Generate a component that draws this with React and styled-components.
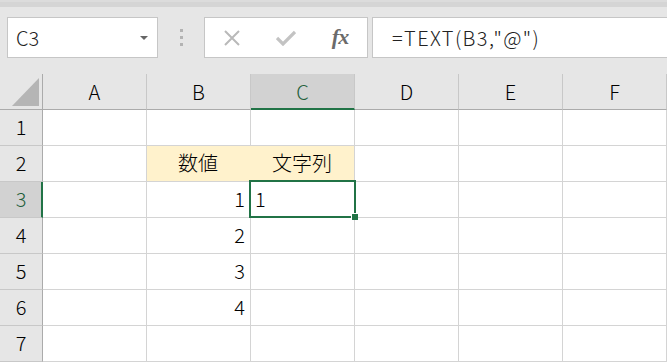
import React from 'react';
import styled, { createGlobalStyle } from 'styled-components';

const GlobalStyle = createGlobalStyle`
  html, body {
    margin: 0;
    padding: 0;
    background: #e6e6e6;
    overflow: hidden;
  }
  body {
    font-family: "Noto Sans CJK JP", "Noto Sans", sans-serif;
    font-weight: 300;
    color: #000;
  }
`;

const Window = styled.div`
  width: 667px;
  height: 362px;
  overflow: hidden;
  background: #e6e6e6;
`;

const TopStrip = styled.div`
  height: 7px;
  background: #d5d5d5;
  border-top: 2px solid #dcdcdc;
  box-sizing: border-box;
`;

const FormulaBar = styled.div`
  display: flex;
  align-items: center;
  height: 67px;
  padding: 10px 0 16px 7px;
  box-sizing: border-box;
`;

const NameBox = styled.div`
  position: relative;
  display: flex;
  align-items: center;
  width: 151px;
  height: 41px;
  box-sizing: border-box;
  padding-left: 8px;
  background: #fff;
  border: 1px solid #c6c6c6;
  font-size: 20px;
  color: #222;
`;

const DropArrow = styled.span`
  position: absolute;
  right: 9px;
  top: 18px;
  width: 0;
  height: 0;
  border-left: 4px solid transparent;
  border-right: 4px solid transparent;
  border-top: 4px solid #666;
`;

const Grip = styled.div`
  width: 46px;
  display: flex;
  flex-direction: column;
  align-items: center;
  gap: 4px;
`;

const GripDot = styled.span`
  width: 3px;
  height: 3px;
  background: #b3b3b3;
`;

const ButtonBox = styled.div`
  display: flex;
  width: 164px;
  height: 41px;
  box-sizing: border-box;
  background: #fff;
  border: 1px solid #c6c6c6;
`;

const BarButton = styled.div`
  flex: 1;
  display: flex;
  align-items: center;
  justify-content: center;
`;

const FxLabel = styled.span`
  font-family: "Liberation Serif", "DejaVu Serif", serif;
  font-style: italic;
  font-weight: bold;
  font-size: 22px;
  color: #6b6b6b;
  letter-spacing: -1px;
  margin-top: -2px;
`;

const FormulaInput = styled.div`
  flex: 1;
  height: 41px;
  margin-left: 4px;
  box-sizing: border-box;
  display: flex;
  align-items: center;
  padding-left: 19px;
  background: #fff;
  border: 1px solid #c6c6c6;
  border-right: none;
  font-size: 20px;
  letter-spacing: 1.4px;
  color: #222;
`;

const Sheet = styled.div`
  display: grid;
  grid-template-columns: 43px repeat(5, 104px) 1fr;
  grid-template-rows: 36px repeat(7, 36px);
  background: #fff;
`;

const Corner = styled.div`
  position: relative;
  background: #e6e6e6;
  border-right: 1px solid #ababab;
  border-bottom: 1px solid #ababab;
`;

const CornerTriangle = styled.span`
  position: absolute;
  right: 3px;
  bottom: 3px;
  width: 0;
  height: 0;
  border-left: 27px solid transparent;
  border-bottom: 28px solid #b5b5b5;
`;

const ColHeader = styled.div`
  display: flex;
  align-items: center;
  justify-content: center;
  box-sizing: border-box;
  background: ${(p) => (p.$active ? '#d2d2d2' : '#e6e6e6')};
  border-right: 1px solid #c8c8c8;
  border-bottom: ${(p) => (p.$active ? '2px solid #217346' : '1px solid #ababab')};
  color: ${(p) => (p.$active ? '#1e5f3b' : '#000')};
  font-size: 20px;
  padding-top: ${(p) => (p.$active ? '1px' : '0')};
`;

const RowHeader = styled.div`
  display: flex;
  align-items: center;
  justify-content: center;
  box-sizing: border-box;
  background: ${(p) => (p.$active ? '#d2d2d2' : '#e6e6e6')};
  border-right: ${(p) => (p.$active ? '2px solid #217346' : '1px solid #ababab')};
  border-bottom: 1px solid #c8c8c8;
  color: ${(p) => (p.$active ? '#1e5f3b' : '#000')};
  font-size: 20px;
  padding-left: ${(p) => (p.$active ? '1px' : '0')};
  padding-bottom: 2px;
`;

const Cell = styled.div`
  position: relative;
  z-index: ${(p) => (p.$selected ? 2 : 'auto')};
  display: flex;
  align-items: center;
  justify-content: ${(p) => p.$align || 'flex-start'};
  box-sizing: border-box;
  padding: 0 5px 2px 4px;
  background: ${(p) => (p.$fill ? '#fff2cc' : '#fff')};
  border-right: 1px solid ${(p) => (p.$fill && p.$joinRight ? '#fff2cc' : '#d4d4d4')};
  border-bottom: 1px solid #d4d4d4;
  font-size: 20px;
  white-space: nowrap;
`;

const Selection = styled.span`
  position: absolute;
  top: -2px;
  left: -2px;
  right: -2px;
  bottom: -1px;
  border: 2px solid #217346;
  pointer-events: none;
`;

const FillHandle = styled.span`
  position: absolute;
  right: -4px;
  bottom: -4px;
  width: 6px;
  height: 6px;
  background: #217346;
  border: 1px solid #fff;
  border-right: none;
  border-bottom: none;
`;

const columns = ['A', 'B', 'C', 'D', 'E', 'F'];

const data = {
  'B2': { text: '数値', align: 'center', fill: true, joinRight: true },
  'C2': { text: '文字列', align: 'center', fill: true },
  'B3': { text: '1', align: 'flex-end' },
  'C3': { text: '1', selected: true },
  'B4': { text: '2', align: 'flex-end' },
  'B5': { text: '3', align: 'flex-end' },
  'B6': { text: '4', align: 'flex-end' },
};

const CloseIcon = () => (
  <svg width="20" height="16" viewBox="0 0 20 16">
    <path d="M3 1 L17 15 M17 1 L3 15" stroke="#b9b9b9" strokeWidth="2" fill="none" />
  </svg>
);

const CheckIcon = () => (
  <svg width="20" height="16" viewBox="0 0 20 16">
    <path d="M1 8 L7 14 L19 2" stroke="#c3c3c3" strokeWidth="3.2" fill="none" />
  </svg>
);

const App = () => {
  return (
    <Window>
      <GlobalStyle />
      <TopStrip />
      <FormulaBar>
        <NameBox>
          C3
          <DropArrow />
        </NameBox>
        <Grip>
          <GripDot />
          <GripDot />
          <GripDot />
        </Grip>
        <ButtonBox>
          <BarButton><CloseIcon /></BarButton>
          <BarButton><CheckIcon /></BarButton>
          <BarButton><FxLabel>fx</FxLabel></BarButton>
        </ButtonBox>
        <FormulaInput>=TEXT(B3,"@")</FormulaInput>
      </FormulaBar>
      <Sheet>
        <Corner><CornerTriangle /></Corner>
        {columns.map((c) => (
          <ColHeader key={c} $active={c === 'C'}>{c}</ColHeader>
        ))}
        {[1, 2, 3, 4, 5, 6, 7].map((r) => (
          <React.Fragment key={r}>
            <RowHeader $active={r === 3}>{r}</RowHeader>
            {columns.map((c) => {
              const cell = data[c + r] || {};
              return (
                <Cell
                  key={c + r}
                  $align={cell.align}
                  $fill={cell.fill}
                  $joinRight={cell.joinRight}
                  $selected={cell.selected}
                >
                  {cell.text}
                  {cell.selected && (
                    <Selection>
                      <FillHandle />
                    </Selection>
                  )}
                </Cell>
              );
            })}
          </React.Fragment>
        ))}
      </Sheet>
    </Window>
  );
};

export default App;
